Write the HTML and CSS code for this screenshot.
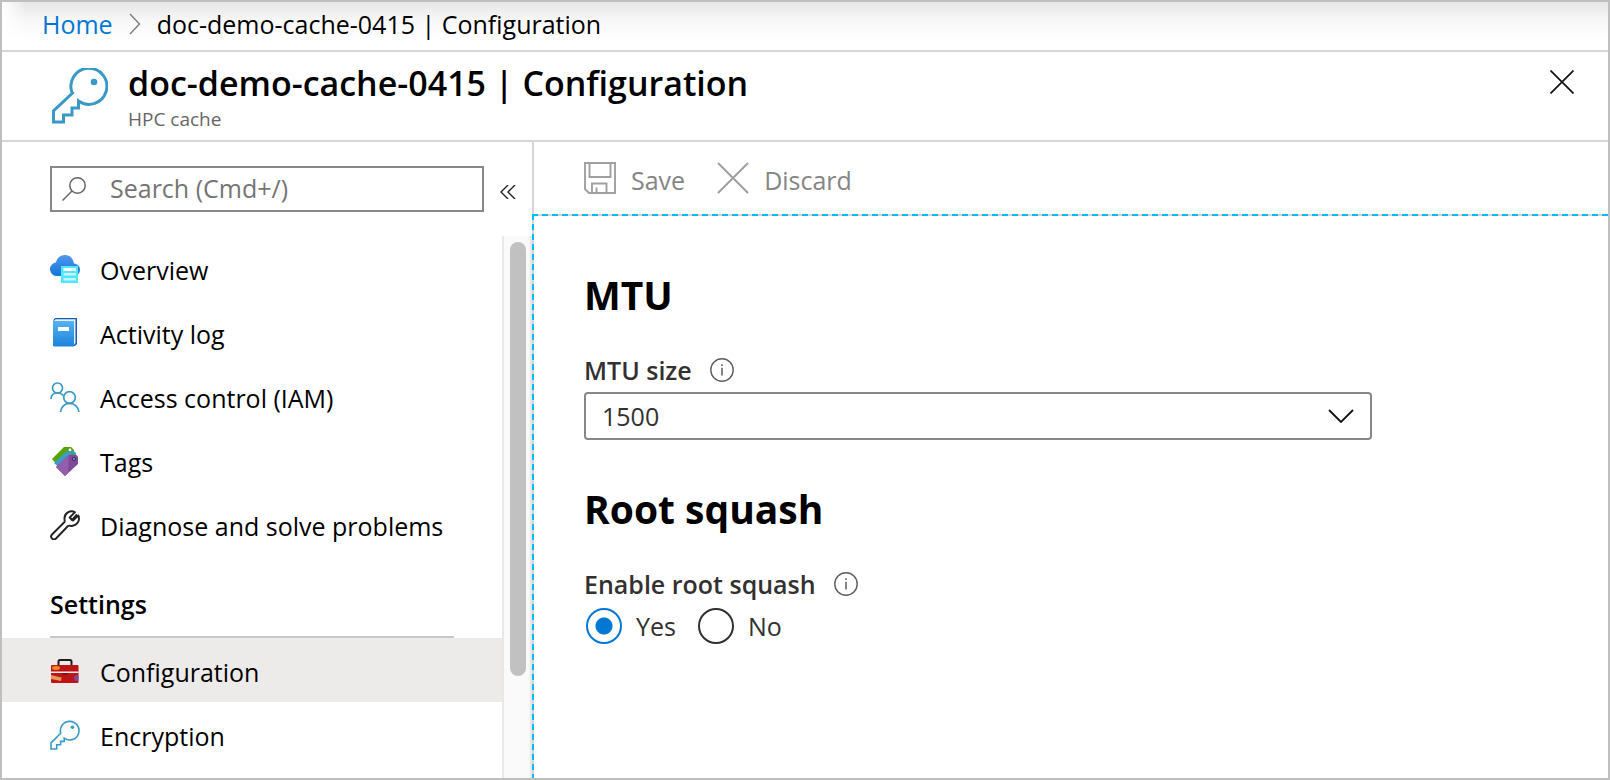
FILE: index.html
```html
<!DOCTYPE html>
<html lang="en">
<head>
<meta charset="utf-8">
<meta name="viewport" content="width=device-width, initial-scale=1">
<title>doc-demo-cache-0415 | Configuration</title>
<link rel="stylesheet" href="styles.css">
</head>
<body>
<svg class="symbols" aria-hidden="true">
  <symbol id="key" viewBox="0 0 30 30">
    <path d="M10.700 13.200A9.300 9.300 0 1 1 14.200 18.200V21.400H10.600V24.800H6.700V29H1V22.900Z" fill="#fff" stroke="#3999c6" stroke-width="1.600"/>
    <circle cx="22.400" cy="7.300" r="1.800" fill="#3999c6"/>
  </symbol>
  <symbol id="info" viewBox="0 0 24 24">
    <circle cx="12" cy="12" r="11.200" fill="none" stroke="#605e5c" stroke-width="1.400"/>
    <path d="M12 9.800V17.500M12 6.300V8" stroke="#605e5c" stroke-width="1.500"/>
  </symbol>
</svg>
<div class="window">
  <nav class="breadcrumb" aria-label="Breadcrumb">
    <a href="#home">Home</a>
    <svg class="crumb-arrow" viewBox="0 0 12 22"><path d="M1 1L10.500 11L1 21" fill="none" stroke="#777" stroke-width="1.300"/></svg>
    <span>doc-demo-cache-0415 | Configuration</span>
  </nav>
  <header class="header">
    <svg class="header-icon" viewBox="0 0 56 56">
      <path d="M20 24.500A18 18 0 1 1 26.500 33V40H20V47H11.500V54H1.500V43L20.500 25Z" fill="none" stroke="#3999c6" stroke-width="3"/>
      <circle cx="42" cy="14" r="3.300" fill="#3999c6"/>
    </svg>
    <div class="header-text">
      <h1>doc-demo-cache-0415 | Configuration</h1>
      <p>HPC cache</p>
    </div>
    <button class="close" type="button" aria-label="Close">
      <svg viewBox="0 0 24 24"><path d="M.5.5L23.500 23.500M23.500.5L.5 23.500" stroke="#111" stroke-width="1.700"/></svg>
    </button>
  </header>
  <div class="body">
    <aside class="sidebar">
      <div class="search-row">
        <div class="search">
          <svg class="search-icon" viewBox="0 0 24 24"><g fill="none" stroke="#666" stroke-width="1.500"><circle cx="15.500" cy="8.500" r="7.700"/><path d="M10 14L.5 23.500"/></g></svg>
          <input type="text" aria-label="Search menu" placeholder="Search (Cmd+/)">
        </div>
        <button class="collapse" type="button" aria-label="Collapse menu">
          <svg viewBox="0 0 16 14"><path d="M8 0L1 7L8 14M15 0L8 7L15 14" fill="none" stroke="#222" stroke-width="1.400"/></svg>
        </button>
      </div>
      <div class="menu-area">
        <nav class="menu" aria-label="Resource menu">
          <ul>
            <li><a href="#overview">
              <svg class="icon" viewBox="0 0 30 30">
                <defs><linearGradient id="cloud" x2="0" y2="1"><stop stop-color="#5196ee"/><stop offset="1" stop-color="#1175d8"/></linearGradient></defs>
                <path d="M7 22A7 7 0 0 1 0 15.500C0 11.500 2.600 9 6 8.500C6.700 4 10.500 1 15 1C20 1 23 4.500 24 9.500C27.500 10 30 12.300 30 15.500C30 19.500 27 22 24 22Z" fill="url(#cloud)"/>
                <path d="M11 12H28V29H11Z" fill="#50e6ff"/><path d="M13.500 14H26V17H13.500Z" fill="#fff"/><path d="M13.500 19H26V21.500H13.500ZM13.500 24H26V26.500H13.500Z" fill="#c3f6ff"/>
              </svg>
              <span>Overview</span></a></li>
            <li><a href="#activity">
              <svg class="icon" viewBox="0 0 30 30">
                <defs><linearGradient id="book" x2="0" y2="1"><stop stop-color="#55b2f3"/><stop offset="1" stop-color="#1b83db"/></linearGradient></defs>
                <path d="M5 0H27V26L25 28H3.500V2Z" fill="#175fae"/><path d="M5.500 1.200H25.500V25L24 27V3H4Z" fill="#e8eef5"/>
                <path d="M3 3H24V28.500H4.500Q3 28.500 3 27Z" fill="url(#book)"/><path d="M8 9H19V13H8Z" fill="#fff"/>
              </svg>
              <span>Activity log</span></a></li>
            <li><a href="#access">
              <svg class="icon" viewBox="0 0 30 30"><g fill="none" stroke="#3999c6" stroke-width="1.700"><circle cx="7.500" cy="6" r="5"/><path d="M1 17C1 13 4 11 7.500 11C10 11 12 12 13.300 13.500"/><circle cx="19.500" cy="15.500" r="5.800"/><path d="M10.500 30C11 25 14.500 21.300 19.500 21.300S28.500 25 29 30"/></g></svg>
              <span>Access control (IAM)</span></a></li>
            <li><a href="#tags">
              <svg class="icon" viewBox="0 0 30 30">
                <path d="M2 13L14 1H21L24 4V8L10 22Z" fill="#57a300"/><circle cx="20" cy="4" r="1.400" fill="#fff"/>
                <path d="M4 17L17 5H24L26 7V11L12 24Z" fill="#3d9bcb"/><circle cx="22.500" cy="8.500" r="1.600" fill="#57a300"/>
                <path d="M6 21L19 9H26.500L28 11V18L15 30Z" fill="#804998"/><path d="M6 21L19 9L18 27L15 30Z" fill="#925daa"/><circle cx="24" cy="13" r="1.700" fill="#3d9bcb" stroke="#50246e"/>
              </svg>
              <span>Tags</span></a></li>
            <li><a href="#diagnose">
              <svg class="icon" viewBox="0 0 30 30"><path d="M25 2.200C20.500-.5 14 3 14.500 9C14.500 10.500 15 11.500 14.500 12L2 24.500C-.5 27 3 31.300 6 28.500L18 16C19 15.200 20 16 21.500 16C27 15.500 30.500 10.500 28.300 5.500L23 10.500L19.700 7.500ZM19.700 7.500L22 10L27 4.500" fill="#fff" stroke="#222" stroke-width="1.900" stroke-linejoin="round"/></svg>
              <span>Diagnose and solve problems</span></a></li>
          </ul>
          <h2>Settings</h2>
          <ul class="group">
            <li><a class="current" aria-current="page" href="#configuration">
              <svg class="icon" viewBox="0 0 30 30">
                <path d="M8.500 10V5.500Q8.500 4 10 4H20Q21.500 4 21.500 5.500V10" fill="none" stroke="#1e1e1e" stroke-width="2"/>
                <rect x="1" y="9" width="27.500" height="18" rx="1" fill="#bc1417"/><path d="M1 15.500H28.500V17H1Z" fill="#eee"/>
                <ellipse cx="6" cy="12" rx="4" ry="1.900" fill="#f08a1d"/><path d="M1 19L11.500 21.500L11 25L1 23Z" fill="#e9965b"/><path d="M12 17H18L17 19H13Z" fill="#801012"/><path d="M28.500 19.500A3 3 0 1 0 28.500 24.500Z" fill="#804998"/>
              </svg>
              <span>Configuration</span></a></li>
            <li><a href="#encryption"><svg class="icon"><use href="#key"/></svg><span>Encryption</span></a></li>
          </ul>
        </nav>
        <div class="track"><div class="thumb"></div></div>
      </div>
    </aside>
    <main class="main">
      <div class="toolbar">
        <button type="button" disabled>
          <svg viewBox="0 0 32 32"><path d="M1 1H31V31H5L1 27ZM5.500 1V15H26.500V1M8 31V21.500H22.500V31M12.500 25.500V31" fill="none" stroke="#a0a0a0" stroke-width="1.900"/></svg>
          <span>Save</span></button>
        <button type="button" disabled>
          <svg viewBox="0 0 32 32"><path d="M1 1L31 31M31 1L1 31" stroke="#a0a0a0" stroke-width="2"/></svg>
          <span>Discard</span></button>
      </div>
      <form class="content">
        <section>
          <h2>MTU</h2>
          <div class="label-row"><label for="mtu">MTU size</label><svg class="info"><use href="#info"/></svg></div>
          <div class="select-box">
            <select id="mtu"><option>1500</option></select>
            <svg viewBox="0 0 26 14"><path d="M1 1L13 13L25 1" fill="none" stroke="#111" stroke-width="1.800"/></svg>
          </div>
        </section>
        <section>
          <h2>Root squash</h2>
          <div class="label-row"><span id="squash">Enable root squash</span><svg class="info"><use href="#info"/></svg></div>
          <div class="radios" role="radiogroup" aria-labelledby="squash">
            <label><input type="radio" name="squash" checked><span>Yes</span></label>
            <label><input type="radio" name="squash"><span>No</span></label>
          </div>
        </section>
      </form>
    </main>
  </div>
</div>
</body>
</html>
```
FILE: styles.css
```css
* { box-sizing: border-box; }
body {
  margin: 0;
  font: 25px/32px "Open Sans", "Noto Sans", sans-serif;
  color: #000;
  background: #fff;
}
h1, h2, p, ul { margin: 0; padding: 0; }
ul { list-style: none; }
a { color: inherit; text-decoration: none; }
button { padding: 0; border: 0; background: none; font: inherit; }
svg { display: block; flex: none; }
.symbols { position: absolute; width: 0; height: 0; }

.window {
  display: flex;
  flex-direction: column;
  min-height: 100vh;
  border: 2px solid #bfbfbf;
}
.breadcrumb {
  display: flex;
  align-items: center;
  gap: 16px;
  height: 50px;
  padding: 0 40px 4px;
  border-bottom: 2px solid #d6d6d6;
  background: linear-gradient(90deg, #fff, transparent 24px), linear-gradient(#e6e6e6, #f7f7f7 18px, #fff 38px);
}
.breadcrumb a { color: #0078d4; }
.crumb-arrow { width: 12px; height: 22px; }

.header {
  display: flex;
  align-items: flex-start;
  gap: 20px;
  height: 90px;
  padding: 8px 34px 0 50px;
  border-bottom: 2px solid #d6d6d6;
}
.header-icon { width: 56px; height: 56px; margin-top: 8px; }
.header-text { flex: 1; padding-top: 1px; }
.header h1 { font-size: 34px; line-height: 44px; font-weight: 600; }
.header p { font-size: 19px; line-height: 28px; color: #666; }
.close { margin-top: 10px; }
.close svg { width: 24px; height: 24px; }

.body { display: flex; flex: 1; }
.sidebar { display: flex; flex-direction: column; width: 530px; flex: none; }
.search-row {
  display: flex;
  align-items: center;
  gap: 16px;
  padding: 24px 16px 24px 48px;
}
.search {
  display: flex;
  align-items: center;
  flex: 1;
  gap: 24px;
  height: 46px;
  padding: 0 10px;
  border: 2px solid #8a8886;
}
.search-icon { width: 24px; height: 24px; }
.search input {
  flex: 1;
  min-width: 0;
  padding: 0 0 2px;
  border: 0;
  outline: 0;
  font: inherit;
  background: none;
}
.search input::placeholder { color: #757575; }
.collapse { padding-top: 6px; }
.collapse svg { width: 16px; height: 14px; }
.menu-area { display: flex; flex: 1; }
.menu { flex: 1; padding-top: 2px; }
.menu a {
  display: flex;
  align-items: center;
  gap: 20px;
  height: 64px;
  padding-left: 48px;
}
.menu .group a { padding-top: 4px; }
.menu .current { background: #edebe9; }
.icon { width: 30px; height: 30px; margin-bottom: 3px; }
.menu h2 {
  height: 80px;
  margin: 0 48px;
  padding-top: 30px;
  border-bottom: 2px solid #c8c8c8;
  font-size: 25px;
  font-weight: 600;
}
.track {
  width: 30px;
  padding: 6px 4px 0 6px;
  border: solid #e8e8e8;
  border-width: 0 2px;
  background: #fafafa;
}
.thumb { width: 16px; height: 81%; border-radius: 8px; background: #c1c1c1; }

.main { display: flex; flex-direction: column; flex: 1; min-width: 0; }
.toolbar {
  display: flex;
  gap: 32px;
  height: 72px;
  padding-left: 50px;
  border-left: 2px solid #d6d6d6;
}
.toolbar button { display: flex; align-items: center; gap: 15px; color: #858585; }
.toolbar span { padding-top: 4px; }
.toolbar svg { width: 32px; height: 32px; }
.content {
  flex: 1;
  padding: 55px 52px;
  background:
    repeating-linear-gradient(90deg, #00bcff 0 6px, #d6d6d6 6px 10px) top / 100% 2px no-repeat,
    repeating-linear-gradient(#00bcff 0 6px, #d6d6d6 6px 10px) left / 2px 100% no-repeat;
}
.content section { max-width: 788px; margin-bottom: 43px; color: #323130; }
.content h2 { font-size: 39px; line-height: 52px; font-weight: 700; color: #000; }
.label-row {
  display: flex;
  align-items: center;
  gap: 18px;
  margin: 33px 0 6px;
  font-weight: 600;
}
.info { width: 24px; height: 24px; }
.select-box { display: grid; align-items: center; }
.select-box > * { grid-area: 1 / 1; }
.select-box select {
  appearance: none;
  width: 100%;
  height: 48px;
  padding: 0 16px;
  border: 2px solid #8a8886;
  border-radius: 4px;
  background: #fff;
  font: inherit;
  color: inherit;
}
.select-box svg { width: 26px; height: 14px; margin-right: 18px; justify-self: end; pointer-events: none; }
.radios { display: flex; gap: 22px; padding: 2px 0 0 2px; }
.radios label { display: flex; align-items: center; gap: 14px; }
.radios input {
  appearance: none;
  width: 36px;
  height: 36px;
  margin: 0;
  border: 2px solid #323130;
  border-radius: 50%;
}
.radios input:checked {
  border-color: #0078d4;
  background: radial-gradient(circle, #0078d4 8px, transparent 9px);
}
```
